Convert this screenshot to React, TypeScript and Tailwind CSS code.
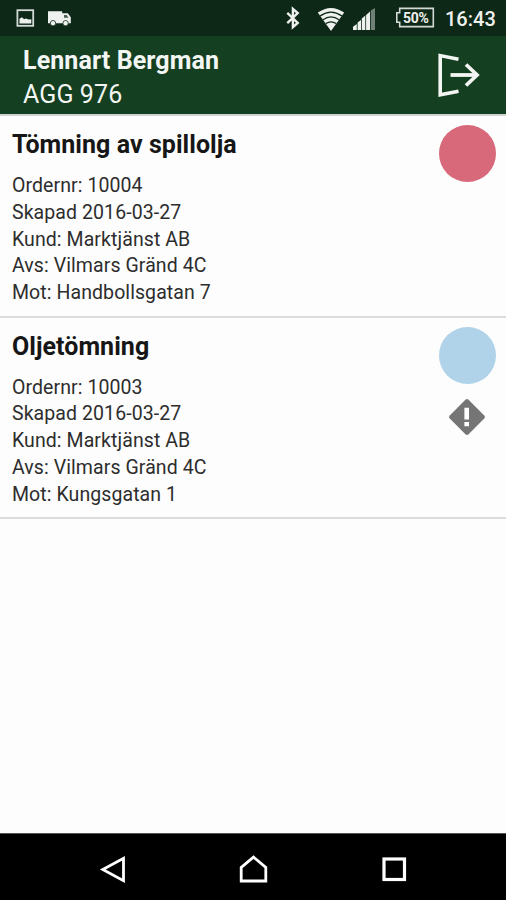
import { clsx } from "clsx";

type Order = {
  id: string;
  title: string;
  created: string;
  customer: string;
  from: string;
  to: string;
  color: string;
  warning?: boolean;
};

const orders: Order[] = [
  {
    id: "10004",
    title: "Tömning av spillolja",
    created: "2016-03-27",
    customer: "Marktjänst AB",
    from: "Vilmars Gränd 4C",
    to: "Handbollsgatan 7",
    color: "bg-[#d8697b]",
  },
  {
    id: "10003",
    title: "Oljetömning",
    created: "2016-03-27",
    customer: "Marktjänst AB",
    from: "Vilmars Gränd 4C",
    to: "Kungsgatan 1",
    color: "bg-[#b0d3ea]",
    warning: true,
  },
];

function StatusBar() {
  return (
    <div className="flex h-9 shrink-0 items-center bg-[#0e2818] pl-4 pr-[11px] text-[#eef1ee]">
      {/* picture */}
      <svg width="19" height="36" viewBox="0 0 19 36" fill="none">
        <rect x="1.4" y="10.2" width="15.8" height="15.6" stroke="#d3d9d4" strokeWidth="1.8" />
        <path d="M3.5 23.4v-4.6l2.5-1.5 2 1.9 2-.6 2.5 1 2.8-.4v4.2z" fill="#eef1ee" />
      </svg>
      {/* truck */}
      <svg className="ml-[12px]" width="25" height="36" viewBox="0 0 25 36" fill="currentColor">
        <path d="M1 11.2h14.2v2.1h5.6l3 4v6H1z" />
        <path d="M17 15h2.6l2 2.8H17z" fill="#4c5f52" />
        <circle cx="6" cy="23.2" r="2.7" stroke="#0e2818" strokeWidth=".8" />
        <circle cx="18.6" cy="23.2" r="2.7" stroke="#0e2818" strokeWidth=".8" />
      </svg>
      {/* bluetooth */}
      <svg className="ml-auto" width="16" height="36" viewBox="0 0 16 36" fill="none">
        <path
          d="M2.3 12.8 12.7 23l-4.8 4.2V8.9l4.8 4.2L2.3 23.2"
          stroke="currentColor"
          strokeWidth="2.4"
        />
      </svg>
      {/* wifi */}
      <svg className="ml-[16px]" width="28" height="36" viewBox="0 0 28 36" fill="none">
        <path d="M.8 12.6Q14 3.2 27.2 12.6L14 31z" fill="currentColor" />
        <g stroke="#0e2818" strokeWidth="1.3">
          <path d="M3.2 15.9q10.8-7.6 21.6 0" />
          <path d="M6 19.7q8-5.6 16 0" />
          <path d="M8.8 23.5q5.2-3.4 10.4 0" />
        </g>
      </svg>
      {/* signal */}
      <svg className="ml-[8px]" width="24" height="36" viewBox="0 0 24 36" fill="currentColor">
        <path d="M0 30v-3.2l3.8-2.8v6zM4.6 30v-7.4l3.4-2.6v10zM8.8 30V18.6l3.5-3V30zM13.1 30V15l3.9-3.4V30z" />
        <path d="M17.8 30V10.6L22 8v22z" fill="#6f8176" />
      </svg>
      {/* battery */}
      <div className="relative ml-[18px] h-[36px] w-[40px]">
        <svg width="40" height="36" viewBox="0 0 40 36" fill="none">
          <path
            d="M4.7 8.4h33.6v18.2H4.7v-4.3H1.8v-9.6h2.9z"
            stroke="#d3d9d4"
            strokeWidth="1.6"
          />
        </svg>
        <span className="absolute left-[8px] top-[8px] text-[14px] font-bold leading-[20px] tracking-[-0.3px]">
          50%
        </span>
      </div>
      <span className="ml-[10px] w-[50px] whitespace-nowrap pt-[2px] text-[20px] font-medium leading-9">
        16:43
      </span>
    </div>
  );
}

function Header() {
  return (
    <header className="flex h-[78px] shrink-0 items-start justify-between bg-[#153f21] pl-[23px] pr-[25px] text-[#f3f6f3]">
      <div className="pt-[8px] leading-[34px]">
        <h1 className="text-[25px] font-bold tracking-[0.1px]">Lennart Bergman</h1>
        <p className="text-[25px] tracking-[0.1px]">AGG 976</p>
      </div>
      <svg
        className="mt-[16px]"
        width="44"
        height="48"
        viewBox="0 0 44 48"
        fill="none"
        stroke="currentColor"
      >
        <path d="M21.5 7.2 3.2 3.6v39.2L21.5 39.2" strokeWidth="3.6" />
        <path d="M13.5 23H40" strokeWidth="3.8" />
        <path d="M29 12.5 40 23 29 33.5" strokeWidth="3.8" />
      </svg>
    </header>
  );
}

function WarningIcon() {
  return (
    <svg className="mt-[13px]" width="40" height="40" viewBox="0 0 40 40">
      <rect
        x="6.7"
        y="6.7"
        width="26.6"
        height="26.6"
        rx="2.2"
        transform="rotate(45 20 20)"
        fill="#757575"
      />
      <path d="M17.4 10.8H22v11.6h-4.6zM17.4 25H22v4.2h-4.6z" fill="#fff" />
    </svg>
  );
}

function OrderRow({ order }: { order: Order }) {
  return (
    <li className="flex h-[201.5px] items-start justify-between border-b-2 border-[#dcdcdc] pl-3 pr-[10.5px]">
      <div className="pt-[12px]">
        <h2 className="text-[25px] font-bold leading-[34px] tracking-[0.05px] text-[#161616]">
          {order.title}
        </h2>
        <div className="mt-[11px] text-[19.5px] leading-[26.75px] tracking-[0.08px] text-[#2d2d2d]">
          <p>Ordernr: {order.id}</p>
          <p>Skapad {order.created}</p>
          <p>Kund: {order.customer}</p>
          <p>Avs: {order.from}</p>
          <p>Mot: {order.to}</p>
        </div>
      </div>
      <div className="flex flex-col items-center pt-[9px]">
        <span className={clsx("h-[57px] w-[57px] rounded-full", order.color)} />
        {order.warning && <WarningIcon />}
      </div>
    </li>
  );
}

function NavBar() {
  return (
    <nav className="flex h-[67px] shrink-0 items-center justify-between border-t border-[#555] bg-black pl-[98px] pr-[97px] pt-[5px] text-white">
      <svg width="30" height="30" viewBox="0 0 30 30" fill="none" stroke="currentColor">
        <path d="M25.5 3.3v22.4L4.8 14.5z" strokeWidth="2.8" />
      </svg>
      <svg width="30" height="30" viewBox="0 0 30 30" fill="none" stroke="currentColor">
        <path d="M2.2 26V12.4L14.5 2.1l12.3 10.3V26z" strokeWidth="2.8" />
      </svg>
      <svg width="30" height="30" viewBox="0 0 30 30" fill="none" stroke="currentColor">
        <rect x="5" y="4" width="20.5" height="20.5" strokeWidth="3.2" />
      </svg>
    </nav>
  );
}

export default function App() {
  return (
    <div className="flex h-[900px] w-[506px] flex-col overflow-hidden bg-[#fdfdfd] font-['Roboto',sans-serif]">
      <StatusBar />
      <Header />
      <main className="flex-1 border-t-2 border-[#cfd3cf]">
        <ul>
          {orders.map((order) => (
            <OrderRow key={order.id} order={order} />
          ))}
        </ul>
      </main>
      <NavBar />
    </div>
  );
}
